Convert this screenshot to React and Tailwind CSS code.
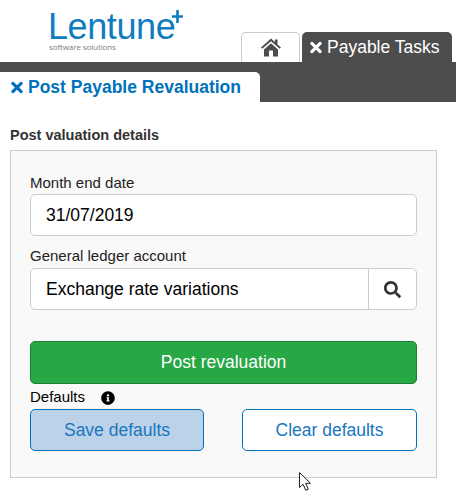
import { FaTimes, FaInfoCircle, FaSearch } from 'react-icons/fa'

function Logo() {
  return (
    <div className="relative ml-[48px] w-[140px] pt-[11px] text-[#0f7cc0]">
      <div className="text-[36px] leading-[32px] tracking-[-0.4px] font-['Liberation_Sans',sans-serif]">Lentune</div>
      <div className="text-[8px] leading-[8px] ml-[1px] tracking-[-0.1px] text-[#808080] font-['Open_Sans',sans-serif]">software solutions</div>
      {/* plus sign at the top of the logo */}
      <svg className="absolute left-[124px] top-[10px]" width="11" height="13" viewBox="0 0 11 13">
        <path d="M5.5 0v13M0 6.5h11" stroke="#0f7cc0" strokeWidth="2.6" />
      </svg>
    </div>
  )
}

function HomeIcon() {
  return (
    <svg width="20" height="19" viewBox="0 0 20 19" fill="#4d4d4d">
      <path d="M10 0.5 0 9.5l1.3 1.3L10 3.2l8.7 7.6 1.3-1.3-3.5-3.1V1.5h-2.6v2.6z" />
      <path d="M3 11.5 10 5.2l7 6.3V18.5h-5v-6H8v6H3z" />
    </svg>
  )
}

function Cursor() {
  return (
    <svg className="absolute left-[298px] top-[471px]" width="14" height="21" viewBox="0 0 14 21">
      <path d="M1.5 1.5v15l3.6-3.2 2.6 6 2.6-1.1-2.6-5.9h4.8z" fill="#fff" stroke="#222" strokeWidth="1" strokeLinejoin="round" />
    </svg>
  )
}

export default function App() {
  return (
    <div className="relative w-[456px] h-[499px] bg-white overflow-hidden text-[17.5px] font-['Liberation_Sans',Arial,sans-serif] text-black">
      <div className="flex h-[62px]">
        <Logo />
        <div className="ml-[53px] mt-[32px] flex gap-[2px]">
          <div className="w-[59px] h-[30px] flex items-center justify-center bg-white border border-b-0 border-[#cccccc] rounded-t-[5px]">
            <HomeIcon />
          </div>
          <div className="w-[150px] h-[30px] flex items-center gap-[5px] pl-[8px] bg-[#4d4d4d] rounded-t-[5px] text-white">
            <FaTimes className="w-[12px] h-[17px]" />
            <span>Payable Tasks</span>
          </div>
        </div>
      </div>

      <div className="h-[40px] bg-[#4d4d4d] pt-[10px]">
        <div className="w-[260px] h-[30px] flex items-center gap-[5px] pl-[11px] bg-white rounded-tr-[5px] text-[#0072bc] font-bold">
          <FaTimes className="w-[12px] h-[17px]" />
          <span>Post Payable Revaluation</span>
        </div>
      </div>

      <div className="pl-[10px] pt-[25px] w-[437px]">
        <h2 className="text-[14.5px] leading-[16px] font-bold text-[#333333] mb-[7px]">Post valuation details</h2>
        <div className="h-[328px] bg-[#f9f9f9] border border-[#cccccc] px-[19px] pt-[23px]">
          <label className="block text-[15px] leading-[18px] text-[#222222] mb-[2px]">Month end date</label>
          <div className="h-[42px] flex items-center pl-[15px] bg-white border border-[#cccccc] rounded-[5px]">31/07/2019</div>

          <label className="block text-[15px] leading-[18px] text-[#222222] mt-[11px] mb-[3px]">General ledger account</label>
          <div className="h-[42px] flex bg-white border border-[#cccccc] rounded-[5px]">
            <div className="flex-1 flex items-center pl-[15px]">Exchange rate variations</div>
            <div className="w-[48px] flex items-center justify-center border-l border-[#cccccc] text-[#333333]">
              <FaSearch className="w-[17px] h-[17px]" />
            </div>
          </div>

          <button className="mt-[31px] w-full h-[43px] bg-[#28a745] border border-[#1e7e34] rounded-[5px] text-white">Post revaluation</button>

          <div className="flex items-center h-[25px] pt-[2px] text-[15px]">
            <span>Defaults</span>
            <FaInfoCircle className="ml-[16px] w-[14px] h-[14px]" />
          </div>
          <div className="flex justify-between">
            <button className="w-[174px] h-[42px] bg-[#bcd2e8] border border-[#0072bc] rounded-[5px] text-[#1a76bf]">Save defaults</button>
            <button className="w-[175px] h-[42px] bg-white border border-[#0072bc] rounded-[5px] text-[#1a76bf]">Clear defaults</button>
          </div>
        </div>
      </div>

      <Cursor />
    </div>
  )
}
